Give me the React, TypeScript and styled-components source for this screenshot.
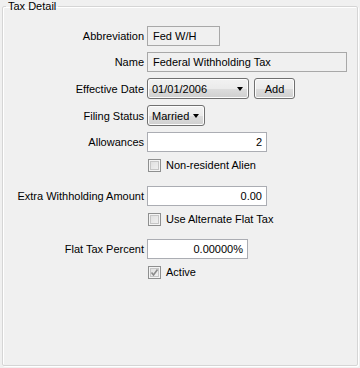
import React from "react";
import styled, { createGlobalStyle } from "styled-components";

const GlobalStyle = createGlobalStyle`
  html, body {
    margin: 0;
    padding: 0;
    background: #f0f0f0;
  }
  body {
    width: 360px;
    height: 368px;
    overflow: hidden;
    font-family: "Liberation Sans", Arial, sans-serif;
    font-size: 11px;
    color: #000000;
  }
`;

const GroupBox = styled.fieldset`
  box-sizing: border-box;
  height: 366px;
  margin: 0 2px;
  padding: 0;
  border: 1px solid #d5d5d5;
  border-radius: 2px;
  box-shadow: inset 1px 1px 0 #ffffff, 1px 1px 0 #ffffff;
`;

const Legend = styled.legend`
  margin-left: 3px;
  padding: 0 2px;
  line-height: 13px;
  font-size: 11px;
`;

const Form = styled.div`
  display: grid;
  grid-template-columns: 141px auto;
  column-gap: 3px;
  row-gap: 6px;
  padding-top: 13px;
`;

const Label = styled.div`
  grid-column: 1;
  display: flex;
  align-items: center;
  justify-content: flex-end;
  white-space: nowrap;
`;

const Cell = styled.div<{ $h: number }>`
  grid-column: 2;
  display: flex;
  align-items: center;
  gap: 5px;
  height: ${(p) => p.$h}px;
`;

const TextBox = styled.div<{ $w: number; $readOnly?: boolean; $right?: boolean }>`
  box-sizing: border-box;
  width: ${(p) => p.$w}px;
  height: 20px;
  display: flex;
  align-items: center;
  justify-content: ${(p) => (p.$right ? "flex-end" : "flex-start")};
  padding: ${(p) => (p.$right ? "0 4px 0 0" : "0 0 0 5px")};
  border: 1px solid ${(p) => (p.$readOnly ? "#a8a8a8" : "#abadb3")};
  background: ${(p) => (p.$readOnly ? "#f0f0f0" : "#ffffff")};
  white-space: nowrap;
`;

const ButtonFace = styled.div<{ $w: number }>`
  box-sizing: border-box;
  width: ${(p) => p.$w}px;
  height: 21px;
  border: 1px solid #707070;
  border-radius: 3px;
  background: linear-gradient(#f2f2f2 0%, #ebebeb 50%, #dddddd 51%, #cfcfcf 100%);
  box-shadow: inset 0 0 0 1px #fcfcfc;
  display: flex;
  align-items: center;
  white-space: nowrap;
`;

const Combo = styled(ButtonFace)`
  justify-content: space-between;
  padding: 0 5px 0 4px;
`;

const Button = styled(ButtonFace)`
  justify-content: center;
`;

const Arrow = styled.span`
  width: 0;
  height: 0;
  border-left: 3.5px solid transparent;
  border-right: 3.5px solid transparent;
  border-top: 4px solid #000000;
  margin-top: 1px;
`;

const CheckRow = styled.label`
  display: flex;
  align-items: flex-start;
  gap: 5px;
  height: 100%;
  padding-top: 1px;
  box-sizing: border-box;
  line-height: 13px;
  margin-left: 1px;
`;

const CheckBox = styled.span`
  box-sizing: border-box;
  width: 13px;
  height: 13px;
  border: 1px solid #8e8f8f;
  background: linear-gradient(135deg, #dcdcdc 0%, #f4f4f4 100%);
  box-shadow: inset 0 0 0 1px #f4f4f4, inset 0 0 0 2px #c6c6c6;
  display: flex;
  align-items: center;
  justify-content: center;
`;

const Check = ({ checked, label }: { checked?: boolean; label: string }) => (
  <CheckRow>
    <CheckBox>
      {checked && (
        <svg width="9" height="9" viewBox="0 0 9 9">
          <path d="M1.5 4.5 L3.5 7 L7.5 1.5" fill="none" stroke="#8a8a8a" strokeWidth="1.6" />
        </svg>
      )}
    </CheckBox>
    <span>{label}</span>
  </CheckRow>
);

const App = () => {
  return (
    <>
      <GlobalStyle />
      <GroupBox>
        <Legend>Tax Detail</Legend>
        <Form>
          <Label>Abbreviation</Label>
          <Cell $h={20}>
            <TextBox $w={73} $readOnly>Fed W/H</TextBox>
          </Cell>

          <Label>Name</Label>
          <Cell $h={20}>
            <TextBox $w={200} $readOnly>Federal Withholding Tax</TextBox>
          </Cell>

          <Label>Effective Date</Label>
          <Cell $h={21}>
            <Combo $w={102}>
              <span>01/01/2006</span>
              <Arrow />
            </Combo>
            <Button $w={41}>Add</Button>
          </Cell>

          <Label>Filing Status</Label>
          <Cell $h={21}>
            <Combo $w={58}>
              <span>Married</span>
              <Arrow />
            </Combo>
          </Cell>

          <Label>Allowances</Label>
          <Cell $h={20}>
            <TextBox $w={120} $right>2</TextBox>
          </Cell>

          <Label />
          <Cell $h={22}>
            <Check label="Non-resident Alien" />
          </Cell>

          <Label>Extra Withholding Amount</Label>
          <Cell $h={20}>
            <TextBox $w={120} $right>0.00</TextBox>
          </Cell>

          <Label />
          <Cell $h={21}>
            <Check label="Use Alternate Flat Tax" />
          </Cell>

          <Label>Flat Tax Percent</Label>
          <Cell $h={20}>
            <TextBox $w={101} $right>0.00000%</TextBox>
          </Cell>

          <Label />
          <Cell $h={21}>
            <Check checked label="Active" />
          </Cell>
        </Form>
      </GroupBox>
    </>
  );
};

export default App;
